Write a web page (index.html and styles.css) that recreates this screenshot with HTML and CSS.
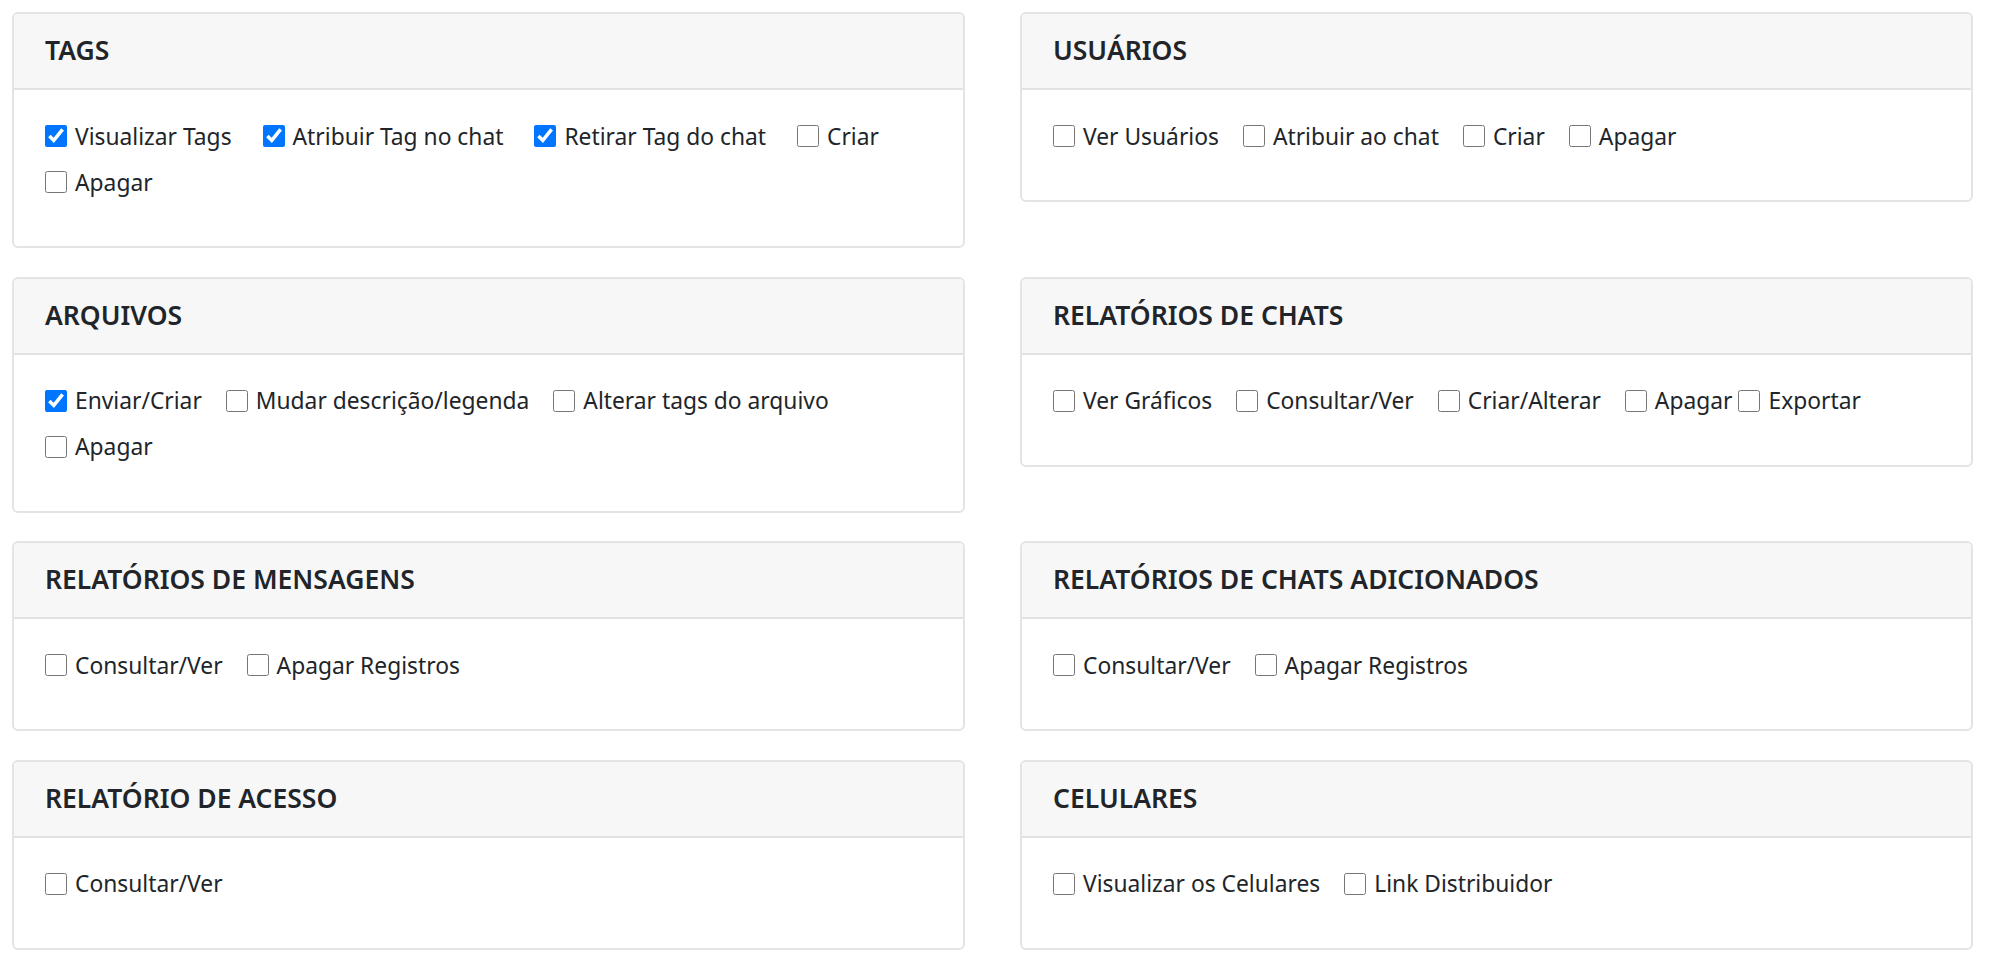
FILE: index.html
```html
<!DOCTYPE html>
<html lang="pt-BR">
<head>
<meta charset="utf-8">
<title>Permissões</title>
<link rel="stylesheet" href="styles.css">
</head>
<body>
<main class="grid">
  <section class="card">
    <header class="card-header">TAGS</header>
    <div class="card-body card-body-wide">
      <label class="check"><input type="checkbox" checked><span>Visualizar Tags</span></label>
      <label class="check"><input type="checkbox" checked><span>Atribuir Tag no chat</span></label>
      <label class="check"><input type="checkbox" checked><span>Retirar Tag do chat</span></label>
      <label class="check"><input type="checkbox"><span>Criar</span></label>
      <label class="check"><input type="checkbox"><span>Apagar</span></label>
    </div>
  </section>
  <section class="card">
    <header class="card-header">USUÁRIOS</header>
    <div class="card-body">
      <label class="check"><input type="checkbox"><span>Ver Usuários</span></label>
      <label class="check"><input type="checkbox"><span>Atribuir ao chat</span></label>
      <label class="check"><input type="checkbox"><span>Criar</span></label>
      <label class="check"><input type="checkbox"><span>Apagar</span></label>
    </div>
  </section>
  <section class="card">
    <header class="card-header">ARQUIVOS</header>
    <div class="card-body">
      <label class="check"><input type="checkbox" checked><span>Enviar/Criar</span></label>
      <label class="check"><input type="checkbox"><span>Mudar descrição/legenda</span></label>
      <label class="check"><input type="checkbox"><span>Alterar tags do arquivo</span></label>
      <label class="check"><input type="checkbox"><span>Apagar</span></label>
    </div>
  </section>
  <section class="card">
    <header class="card-header">RELATÓRIOS DE CHATS</header>
    <div class="card-body">
      <label class="check"><input type="checkbox"><span>Ver Gráficos</span></label>
      <label class="check"><input type="checkbox"><span>Consultar/Ver</span></label>
      <label class="check"><input type="checkbox"><span>Criar/Alterar</span></label>
      <label class="check check-tight"><input type="checkbox"><span>Apagar</span></label>
      <label class="check"><input type="checkbox"><span>Exportar</span></label>
    </div>
  </section>
  <section class="card">
    <header class="card-header">RELATÓRIOS DE MENSAGENS</header>
    <div class="card-body">
      <label class="check"><input type="checkbox"><span>Consultar/Ver</span></label>
      <label class="check"><input type="checkbox"><span>Apagar Registros</span></label>
    </div>
  </section>
  <section class="card">
    <header class="card-header">RELATÓRIOS DE CHATS ADICIONADOS</header>
    <div class="card-body">
      <label class="check"><input type="checkbox"><span>Consultar/Ver</span></label>
      <label class="check"><input type="checkbox"><span>Apagar Registros</span></label>
    </div>
  </section>
  <section class="card">
    <header class="card-header">RELATÓRIO DE ACESSO</header>
    <div class="card-body">
      <label class="check"><input type="checkbox"><span>Consultar/Ver</span></label>
    </div>
  </section>
  <section class="card">
    <header class="card-header">CELULARES</header>
    <div class="card-body">
      <label class="check"><input type="checkbox"><span>Visualizar os Celulares</span></label>
      <label class="check"><input type="checkbox"><span>Link Distribuidor</span></label>
    </div>
  </section>
</main>
</body>
</html>
```
FILE: styles.css
```css
* { box-sizing: border-box; }

html, body {
  margin: 0;
  padding: 0;
  background: #ffffff;
}

body {
  font-family: "Noto Sans", "Open Sans", sans-serif;
  color: #212529;
  padding: 12px 0 0 12px;
}

.grid {
  display: grid;
  grid-template-columns: 953px 953px;
  column-gap: 55px;
  row-gap: 28.5px;
  align-items: start;
}

.card {
  border: 2px solid #e4e4e4;
  border-radius: 6px;
  background: #ffffff;
  overflow: hidden;
}

.card-header {
  height: 76px;
  display: flex;
  align-items: center;
  padding: 0 31px 2px;
  background: #f7f7f7;
  border-bottom: 2px solid #e2e2e2;
  font-size: 26.5px;
  font-weight: 600;
}

.card-body {
  display: flex;
  flex-wrap: wrap;
  padding: 23px 34px 41px 31px;
}

.check {
  display: flex;
  align-items: center;
  height: 46px;
  margin-right: 24px;
  font-size: 22.8px;
  cursor: pointer;
}

.card-body-wide .check {
  margin-right: 31px;
}

.check-tight {
  margin-right: 6px;
}

.check input {
  width: 22px;
  height: 22px;
  margin: 0 8px 0 0;
  accent-color: #0075ff;
}
```
